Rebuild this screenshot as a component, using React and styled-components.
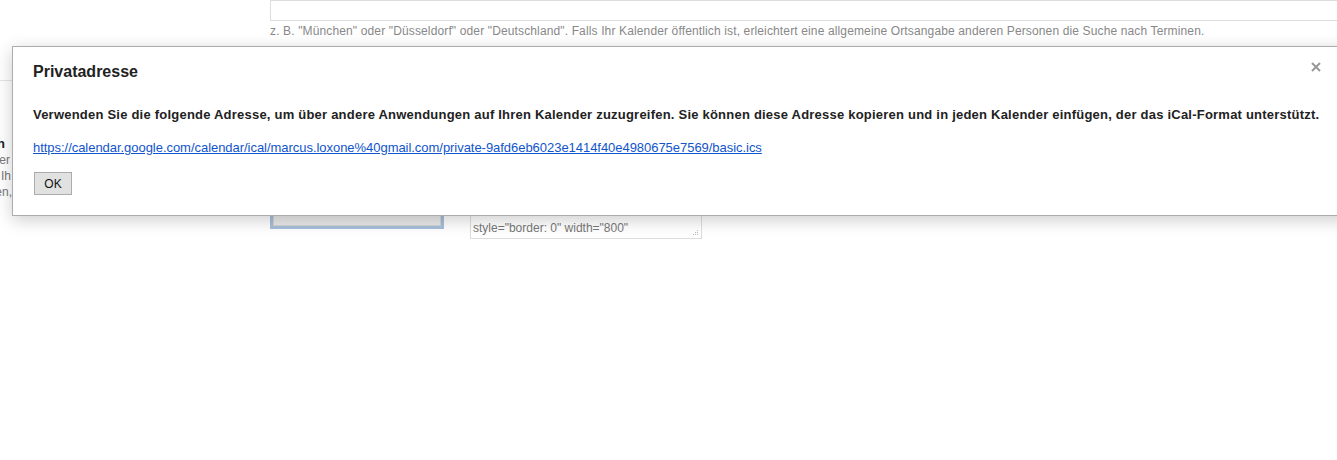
import React from "react";
import styled, { createGlobalStyle } from "styled-components";

const GlobalStyle = createGlobalStyle`
  html, body {
    margin: 0;
    padding: 0;
    overflow: hidden;
    background: #fff;
    font-family: "Liberation Sans", Arial, sans-serif;
  }
`;

const Page = styled.div`
  position: relative;
  width: 1337px;
  height: 460px;
  display: flex;
  overflow: hidden;
`;

const Sidebar = styled.div`
  width: 270px;
  flex-shrink: 0;
  display: flex;
  flex-direction: column;
`;

const SidebarHead = styled.div`
  height: 80px;
  border-bottom: 1px solid #e5e5e5;
`;

const SidebarClip = styled.div`
  width: 12px;
  overflow: hidden;
  margin-top: 54px;
  display: flex;
  flex-direction: column;
`;

const SideLine = styled.div`
  display: flex;
  justify-content: flex-end;
  white-space: nowrap;
  height: ${(p) => (p.$bold ? "17px" : "16px")};
  line-height: ${(p) => (p.$bold ? "17px" : "16px")};
  padding-right: ${(p) => p.$pad}px;
  font-size: ${(p) => (p.$bold ? "13px" : "12px")};
  font-weight: ${(p) => (p.$bold ? "bold" : "normal")};
  color: ${(p) => (p.$bold ? "#222" : "#777")};
`;

const Main = styled.div`
  flex: 1;
  display: flex;
  flex-direction: column;
  min-width: 0;
`;

const TextInput = styled.div`
  height: 19px;
  border: 1px solid #ddd;
  border-right: none;
`;

const Hint = styled.div`
  margin-top: 3px;
  font-size: 12px;
  line-height: 15px;
  letter-spacing: 0.135px;
  color: #888;
  white-space: nowrap;
`;

const EmbedRow = styled.div`
  margin-top: 63px;
  display: flex;
  align-items: flex-start;
  gap: 26px;
`;

const Preview = styled.div`
  width: 168px;
  height: 121px;
  border: 3px solid #a6bfda;
  background: #fff;
  display: flex;
`;

const PreviewInner = styled.div`
  flex: 1;
  border: 1px solid #d4d4d4;
  background: linear-gradient(#f8f8f8, #e9e9e9);
`;

const CodeBox = styled.div`
  position: relative;
  width: 226px;
  height: 132px;
  border: 1px solid #ddd;
  padding: 1px 2px 2px 2px;
  display: flex;
  flex-direction: column;
  justify-content: flex-end;
  overflow: hidden;
  font-size: 12px;
  line-height: 15px;
  color: #777;
`;

const CodeLine = styled.div`
  margin-top: ${(p) => (p.$spaced ? "6px" : "0")};
`;

const Grip = styled.svg`
  position: absolute;
  right: 2px;
  bottom: 2px;
`;

const Modal = styled.div`
  position: absolute;
  left: 12px;
  top: 46px;
  width: 1360px;
  box-sizing: border-box;
  background: #fff;
  border: 1px solid #acacac;
  box-shadow: 0 4px 16px rgba(0, 0, 0, 0.2);
  padding: 14px 20px 20px 20px;
`;

const Title = styled.h2`
  margin: 0;
  font-size: 16px;
  line-height: 21px;
  font-weight: bold;
  color: #222;
`;

const CloseButton = styled.button`
  position: absolute;
  left: 1296px;
  top: 13px;
  width: 14px;
  height: 14px;
  padding: 0;
  border: none;
  background: none;
  display: flex;
  align-items: center;
  justify-content: center;
  cursor: pointer;
`;

const Body = styled.p`
  margin: 25px 0 0 0;
  font-size: 13px;
  line-height: 16px;
  letter-spacing: 0.22px;
  font-weight: bold;
  color: #222;
  white-space: nowrap;
`;

const Link = styled.a`
  display: inline-block;
  margin-top: 17px;
  font-size: 13px;
  line-height: 16px;
  letter-spacing: -0.04px;
  color: #1155cc;
  text-decoration: underline;
`;

const Actions = styled.div`
  margin-top: 16px;
  display: flex;
`;

const OkButton = styled.button`
  margin-left: 1px;
  width: 38px;
  height: 23px;
  padding: 0;
  border: 1px solid #acacac;
  background: #e1e1e1;
  font-family: "Liberation Sans", Arial, sans-serif;
  font-size: 12px;
  color: #111;
`;

export default function App() {
  return (
    <>
      <GlobalStyle />
      <Page>
        <Sidebar>
          <SidebarHead />
          <SidebarClip>
            <SideLine $bold $pad={7}>Diesen Kalender einbetten</SideLine>
            <SideLine $pad={2}>Fügen Sie diesen Code in Ihre Website oder</SideLine>
            <SideLine $pad={1}>Ihren Blog ein. Weitere Optionen finden Sie in Ih</SideLine>
            <SideLine $pad={0}>Einstellungen anpassen,</SideLine>
          </SidebarClip>
        </Sidebar>
        <Main>
          <TextInput />
          <Hint>
            z. B. "München" oder "Düsseldorf" oder "Deutschland". Falls Ihr Kalender öffentlich ist, erleichtert eine allgemeine Ortsangabe anderen Personen die Suche nach Terminen.
          </Hint>
          <EmbedRow>
            <Preview>
              <PreviewInner />
            </Preview>
            <CodeBox>
              <CodeLine>&lt;iframe src="https://calendar.google.com/calendar/embed?src=marcus.loxone%40gmail.com&amp;ctz=Europe%2FBerlin"</CodeLine>
              <CodeLine $spaced>style="border: 0" width="800"</CodeLine>
              <Grip width="7" height="7" viewBox="0 0 7 7">
                <rect x="5" y="1" width="1" height="1" fill="#bbb" />
                <rect x="3" y="3" width="1" height="1" fill="#bbb" />
                <rect x="5" y="3" width="1" height="1" fill="#bbb" />
                <rect x="1" y="5" width="1" height="1" fill="#bbb" />
                <rect x="3" y="5" width="1" height="1" fill="#bbb" />
                <rect x="5" y="5" width="1" height="1" fill="#bbb" />
              </Grip>
            </CodeBox>
          </EmbedRow>
        </Main>

        <Modal>
          <Title>Privatadresse</Title>
          <CloseButton aria-label="Schließen">
            <svg width="10" height="10" viewBox="0 0 10 10">
              <path d="M1 1 L9 9 M9 1 L1 9" stroke="#999" strokeWidth="2" />
            </svg>
          </CloseButton>
          <Body>
            Verwenden Sie die folgende Adresse, um über andere Anwendungen auf Ihren Kalender zuzugreifen. Sie können diese Adresse kopieren und in jeden Kalender einfügen, der das iCal-Format unterstützt.
          </Body>
          <Link href="#">
            https://calendar.google.com/calendar/ical/marcus.loxone%40gmail.com/private-9afd6eb6023e1414f40e4980675e7569/basic.ics
          </Link>
          <Actions>
            <OkButton>OK</OkButton>
          </Actions>
        </Modal>
      </Page>
    </>
  );
}
